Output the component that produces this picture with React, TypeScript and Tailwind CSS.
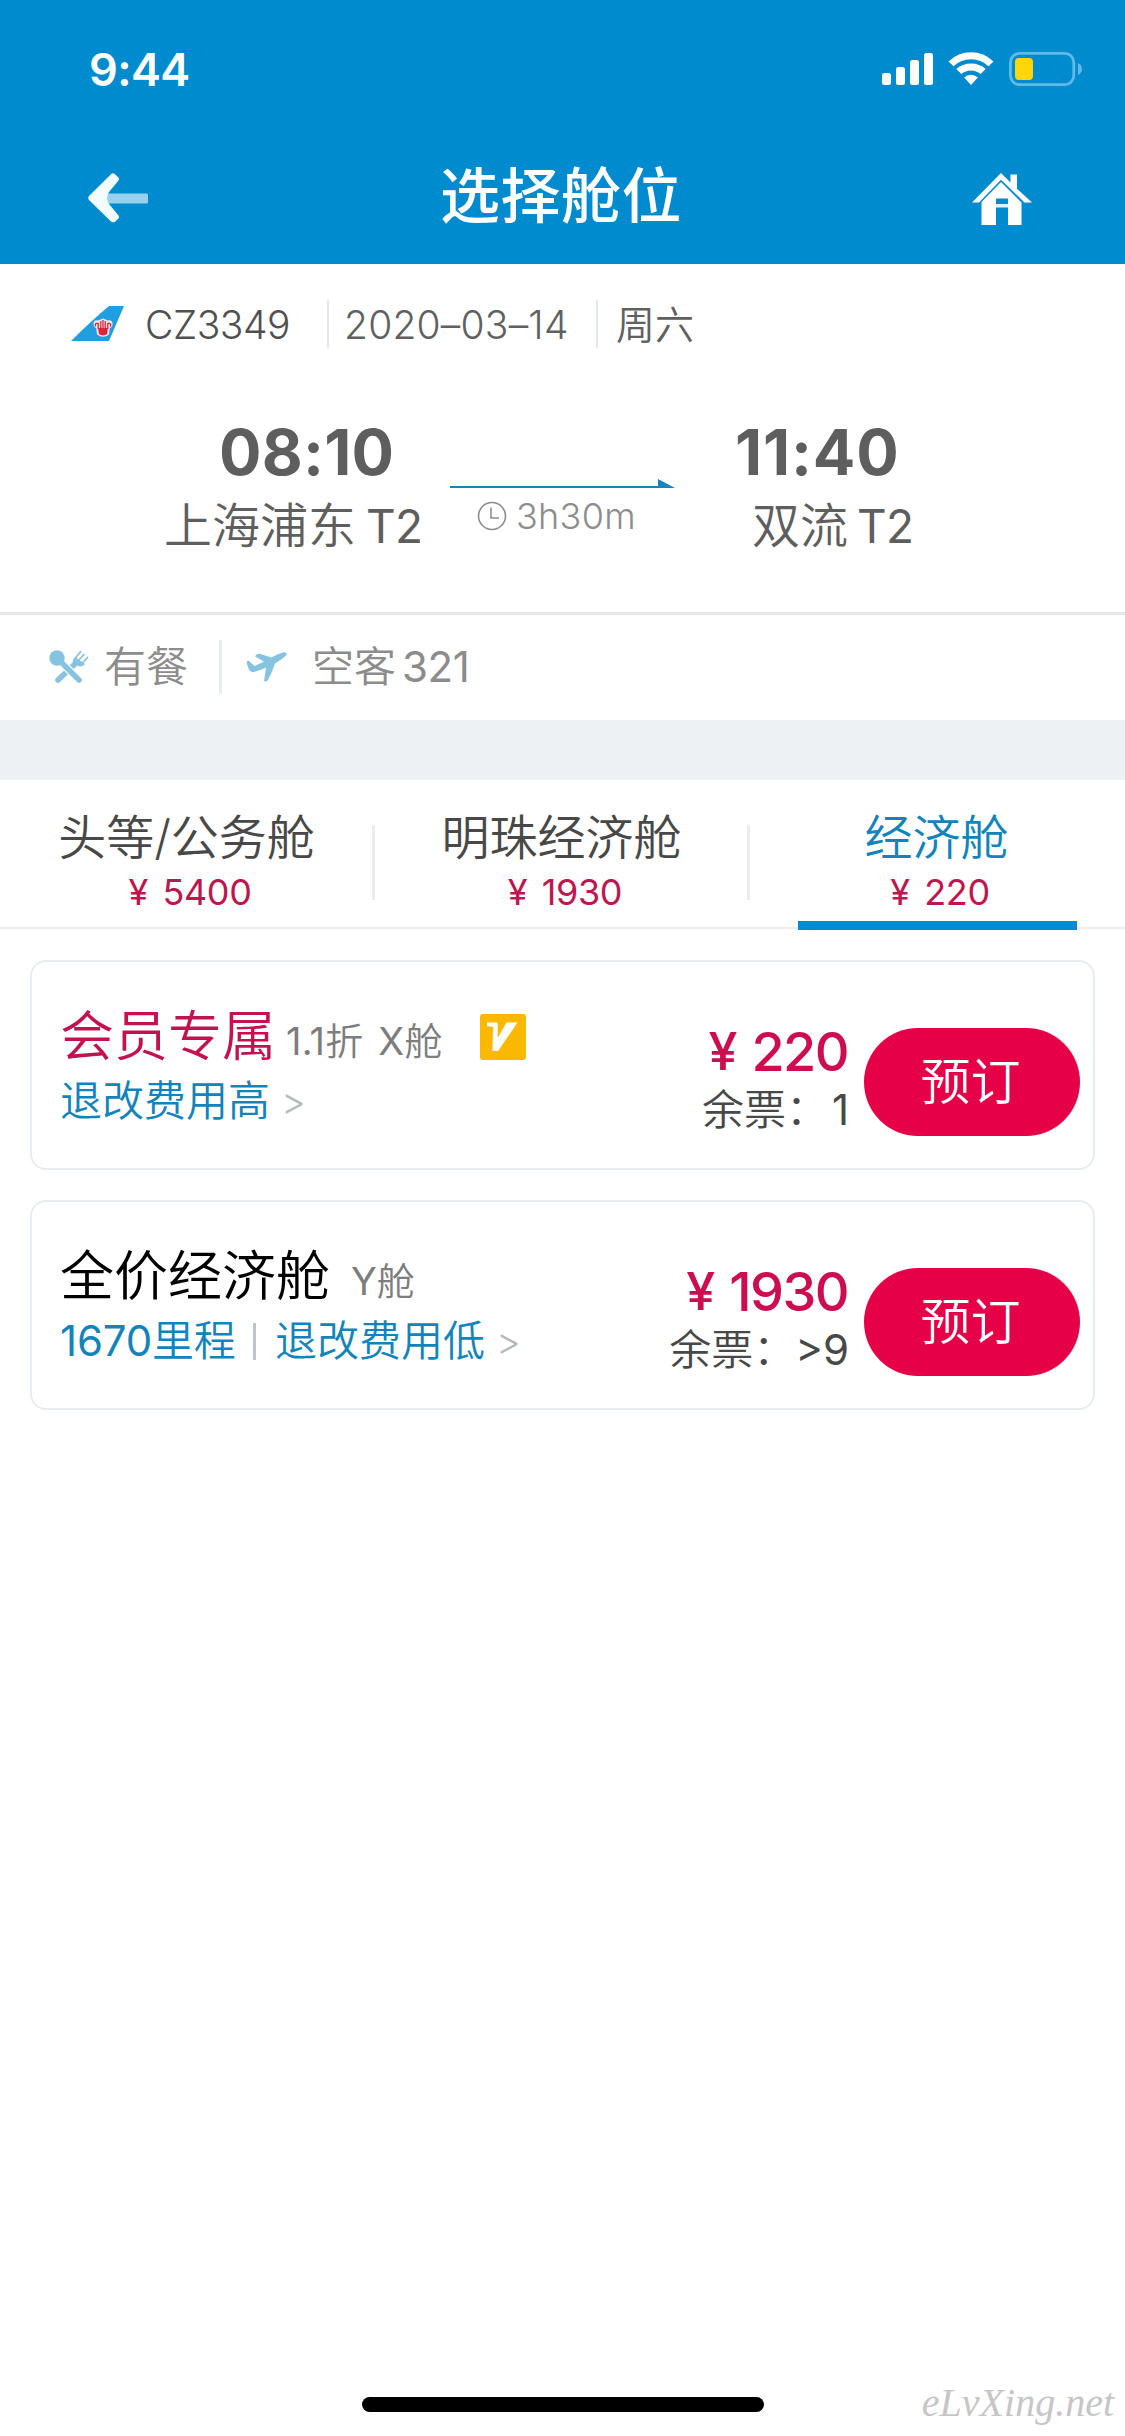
import React from "react";

function StatusIcons() {
  return (
    <div className="flex items-center">
      <svg width="51" height="34" viewBox="0 0 51 34" fill="#fff">
        <rect x="0" y="21" width="9" height="12" rx="2.5" />
        <rect x="14" y="15" width="9" height="18" rx="2.5" />
        <rect x="28" y="8" width="9" height="25" rx="2.5" />
        <rect x="42" y="1" width="9" height="32" rx="2.5" />
      </svg>
      <svg className="ml-[15px]" width="46" height="34" viewBox="0 0 46 34" fill="#fff">
        <path d="M0.5 9.5 Q10 0.3 23 0.3 T45.5 9.5 L40.5 14.3 Q33 7.3 23 7.3 T5.5 14.3Z" />
        <path d="M8.3 17 Q14.5 11.5 23 11.5 T37.7 17 L32.6 22 Q28.5 18.4 23 18.4 T13.4 22Z" />
        <path d="M16.2 25.6 Q19 22.8 23 22.8 T29.8 25.6 L23 33Z" />
      </svg>
      <svg className="ml-[15px]" width="74" height="34" viewBox="0 0 74 34">
        <rect x="1.4" y="1.4" width="63.4" height="31.2" rx="9" fill="none" stroke="#61b9e6" strokeWidth="2.8" />
        <rect x="6" y="6" width="18" height="22" rx="4" fill="#ffd60a" />
        <path d="M69 11 Q73 13 73 17 T69 23Z" fill="#61b9e6" />
      </svg>
    </div>
  );
}

function Header() {
  return (
    <header className="h-[264px] bg-[#008bce] text-white">
      <div className="flex h-[138px] items-center justify-between pl-[89px] pr-[42px]">
        <span className="text-[45px] font-semibold leading-none tracking-[-0.6px]">9:44</span>
        <StatusIcons />
      </div>
      <div className="flex h-[112px] items-center justify-between pl-[88px] pr-[93px]">
        <svg className="mt-[8px]" width="60" height="50" viewBox="0 0 60 50">
          <path d="M17 20.5H58.5Q60 20.5 60 22V29Q60 30.5 58.5 30.5H17Z" fill="#99d1ed" />
          <path
            d="M23 1.2Q25 -0.5 27 1.3L30.5 4.5Q31.5 6 30.5 7.5L21 19Q17 25 21 31L30.5 42.5Q31.5 44 30.5 45.5L27 48.8Q25 50 23 48.5L1 27Q-0.5 25 1 23Z"
            fill="#f3fcff"
          />
        </svg>
        <h1 className="ml-[2px] pt-[3px] text-[60px] font-medium leading-none tracking-[0.5px]">选择舱位</h1>
        <svg className="mt-[10px]" width="60" height="52" viewBox="0 0 60 52" fill="#fff">
          <path d="M0 29.5 L29 0 L38.5 9.5 V1.5 H45 V15.8 L60 29.5 H52.5 L29 6.8 L7 29.5Z" />
          <path d="M29 9 L49.5 29.5 V52 H36 V25.5 H24 V52 H9.5 V29Z" />
          <rect x="24" y="31" width="12" height="3.5" fill="#dff4fc" />
        </svg>
      </div>
    </header>
  );
}

// Sets Latin letters and digits in regular weight beside demi-light Chinese glyphs.
function Mixed({ text }: { text: string }) {
  return (
    <>
      {text.split(/([\x21-\x7e]+)/).map((part, i) => (
        <span key={i} className={i % 2 ? "font-normal" : "font-[350]"}>
          {part}
        </span>
      ))}
    </>
  );
}

function TailLogo() {
  return (
    <svg width="54" height="36" viewBox="0 0 54 36">
      <path d="M38 0H53L38 35H0Q20 15 38 0Z" fill="#1f9fe0" />
      <path
        d="M22.5 18Q22.5 13.5 27 14.5L32 12.5L37 14.5Q41.5 13.5 41.5 18Q41.5 21.5 38.8 22L38 28.5Q32 33 26 28.5L25.2 22Q22.5 21.5 22.5 18Z"
        fill="#f8e3ea"
      />
      <path d="M24.5 20.5Q23.5 16.5 27.2 17.5V23M39.5 20.5Q40.5 16.5 36.8 17.5V23M29.8 15V24M32 14V24M34.2 15V24" stroke="#d7263d" strokeWidth="1.3" fill="none" />
      <path d="M27 22H37L36 28.3Q32 30.5 28 28.3Z" fill="#d7263d" />
    </svg>
  );
}

function FlightInfo() {
  return (
    <section className="h-[348px]">
      <div className="flex h-[120px] items-center pl-[71px] leading-none text-[#505050]">
        <TailLogo />
        <span className="ml-[20px] w-[146px] whitespace-nowrap text-[39px] font-[350] tracking-[-0.5px]">CZ3349</span>
        <span className="ml-[36px] h-[48px] w-[2px] bg-[#e4e8ea]" />
        <span className="ml-[15px] w-[229px] whitespace-nowrap text-[39px] font-light tracking-[0.2px] text-[#606060]">
          2020–03–14
        </span>
        <span className="ml-[23px] h-[48px] w-[2px] bg-[#e4e8ea]" />
        <span className="ml-[18px] text-[39px] font-[350] text-[#606060]">周六</span>
      </div>
      <div className="flex pt-[34px] pl-[164px] text-[#5e5e5e]">
        <div className="flex w-[286px] flex-col">
          <span className="ml-[55px] whitespace-nowrap text-[63px] font-bold leading-[68px] tracking-[0.2px]">08:10</span>
          <span className="mt-[6px] flex items-center gap-[10px] whitespace-nowrap text-[48px] font-[350] leading-[68px]">
            上海浦东<span className="text-[46px] font-normal tracking-[-0.8px]">T2</span>
          </span>
        </div>
        <div className="flex w-[225px] flex-col pt-[61px]">
          <svg width="225" height="9" viewBox="0 0 225 9">
            <path d="M0 7H208V0L225 9H0Z" fill="#1586bd" />
          </svg>
          <div className="mt-[13px] flex items-center pl-[27px] leading-[30px] text-[#8c8c8c]">
            <svg width="30" height="30" viewBox="0 0 30 30" fill="none" stroke="#8c8c8c" strokeWidth="1.6">
              <circle cx="15" cy="15" r="13.5" />
              <path d="M14 6.5V17H22" />
            </svg>
            <span className="ml-[9px] whitespace-nowrap text-[36px] font-[350] tracking-[0.3px]">3h30m</span>
          </div>
        </div>
        <div className="flex w-[240px] flex-col">
          <span className="ml-[60px] whitespace-nowrap text-[63px] font-bold leading-[68px] tracking-[0.8px]">11:40</span>
          <span className="ml-[77px] mt-[6px] flex items-center gap-[9px] whitespace-nowrap text-[48px] font-[350] leading-[68px]">
            双流<span className="text-[46px] font-normal tracking-[-0.8px]">T2</span>
          </span>
        </div>
      </div>
    </section>
  );
}

function Amenities() {
  return (
    <section className="flex h-[108px] items-center border-t-[3px] border-[#e8e8e8] pb-[2px] pl-[49px] text-[42px] font-[350] leading-none text-[#8c8c8c]">
      <svg width="40" height="34" viewBox="0 0 40 34" stroke="#86c3e1" fill="#86c3e1" strokeLinecap="round">
        <path d="M9 30L27 13" strokeWidth="5.5" />
        <path d="M23.5 11.5Q24 9 26 7L36 14Q33.5 17 30 16.5Z" stroke="none" />
        <path d="M26 8.5L31.5 1.8M29.5 10.5L35 4.5M33 13.5L38.5 7.5" strokeWidth="1.8" fill="none" />
        <path d="M9 9L30 30" strokeWidth="8" stroke="#fff" />
        <path d="M9 9L30 30" strokeWidth="5.5" />
        <circle cx="8" cy="8" r="7.7" stroke="none" />
      </svg>
      <span className="ml-[15px]">有餐</span>
      <span className="ml-[31px] h-[54px] w-[3px] bg-[#e9edef]" />
      <svg className="ml-[24px]" width="42" height="34" viewBox="0 0 42 34" fill="#86c3e1">
        <path d="M0.5 11.5Q3 9.5 5 13L8.5 16L18 11.8L9 6.2Q11 3 14.5 4L25.5 7.5Q32 3.5 37.5 2.2Q42 2 40.5 5Q37.5 8 29 13.5Q25.5 24 21.5 30.5Q20 32 18 31L20 17.5Q12 21.5 6 22.2Q2.5 22 0.5 11.5Z" />
      </svg>
      <span className="ml-[24px]">空客</span>
      <span className="ml-[6px] font-normal tracking-[-0.4px]">321</span>
    </section>
  );
}

const tabs = [
  { name: "头等/公务舱", price: "5400", active: false },
  { name: "明珠经济舱", price: "1930", active: false },
  { name: "经济舱", price: "220", active: true },
];

function CabinTabs() {
  return (
    <nav className="flex h-[149px] border-b-2 border-[#ececee]">
      {tabs.map((t, i) => (
        <div key={t.name} className="relative flex h-[149px] w-[375px] shrink-0 flex-col items-center pt-[28px] font-[350]">
          <span
            className={
              t.active
                ? "mr-[2px] text-[48px] leading-[60px] text-[#1384bb]"
                : "mr-[2px] text-[48px] leading-[60px] text-[#484848]"
            }
          >
            {t.name}
          </span>
          <span className="ml-[5px] flex items-center text-[36px] font-normal leading-[48px] tracking-[-0.4px] text-[#bd174f]">
            <span className="w-[34px]">¥</span>
            {t.price}
          </span>
          {i < 2 && <span className="absolute right-0 top-[45px] h-[75px] w-[3px] bg-[#ececee]" />}
          {t.active && <span className="absolute bottom-[-1px] left-[48px] h-[9px] w-[279px] bg-[#008bce]" />}
        </div>
      ))}
    </nav>
  );
}

type Fare = {
  title: string;
  member?: boolean;
  detail: string;
  miles?: string;
  rule: string;
  price: string;
  left: string;
};

const fares: Fare[] = [
  { title: "会员专属", member: true, detail: "1.1折 X舱", rule: "退改费用高", price: "220", left: "1" },
  { title: "全价经济舱", detail: "Y舱", miles: "1670里程", rule: "退改费用低", price: "1930", left: ">9" },
];

function FareCard({ fare }: { fare: Fare }) {
  return (
    <article className="flex h-[210px] justify-between rounded-[16px] border-2 border-[#e8ecee] pl-[28px] pr-[13px]">
      <div className="pt-[42px]">
        <div className="flex h-[66px] items-center whitespace-nowrap leading-none">
          <span className={fare.member ? "text-[54px] font-[350] text-[#c2134f]" : "text-[54px] font-[350] text-black"}>
            {fare.title}
          </span>
          <span
            className={
              fare.member
                ? "ml-[10px] w-[160px] pt-[8px] text-[38px] tracking-[0.2px] text-[#7d7d7d] [word-spacing:4px]"
                : "ml-[21px] pt-[8px] text-[38px] text-[#7d7d7d]"
            }
          >
            <Mixed text={fare.detail} />
          </span>
          {fare.member && (
            <svg className="ml-[34px]" width="46" height="46" viewBox="0 0 46 46">
              <rect width="46" height="46" rx="3" fill="#fbb800" />
              <path d="M7 8.5H16.5Q18 8.5 17.7 11V24L26.5 8.5H37.5L18 37H12.5L13 13L7 12Z" fill="#fff" />
            </svg>
          )}
        </div>
        <div className="flex h-[62px] items-center whitespace-nowrap text-[42px] font-[350] leading-none text-[#1384bb]">
          {fare.miles && (
            <>
              <span className="w-[176px] tracking-[-0.2px]">
                <Mixed text={fare.miles} />
              </span>
              <span className="ml-[17px] mr-[19px] h-[37px] w-[3px] bg-[#bfc4c7]" />
            </>
          )}
          <span>{fare.rule}</span>
          <span className="ml-[11px] text-[38px] text-[#b4b9bd]">&gt;</span>
        </div>
      </div>
      <div className="flex">
        <div className="flex flex-col items-end whitespace-nowrap pt-[60px]">
          <span className="mr-px flex text-[54px] font-medium leading-[60px] tracking-[-1.6px] text-[#cc0e4f]">
            <span className="w-[43px] text-[52px]">¥</span>
            {fare.price}
          </span>
          <span className="flex text-[42px] font-[350] leading-[56px] text-[#484848]">
            余票：<span className={fare.member ? "ml-[4px] font-normal" : "font-normal"}>{fare.left}</span>
          </span>
        </div>
        <button className="ml-[15px] mt-[66px] h-[108px] w-[216px] rounded-full bg-[#e50048] pr-[3px] text-[50px] font-[350] leading-none text-white">
          预订
        </button>
      </div>
    </article>
  );
}

export default function App() {
  return (
    <div className="flex h-[2436px] w-[1125px] flex-col overflow-hidden bg-white font-['Inter','Noto_Sans_CJK_SC',sans-serif]">
      <Header />
      <FlightInfo />
      <Amenities />
      <div className="h-[60px] bg-[#edf1f4]" />
      <CabinTabs />
      <main className="flex flex-1 flex-col gap-[30px] px-[30px] pt-[31px]">
        {fares.map((f) => (
          <FareCard key={f.title} fare={f} />
        ))}
      </main>
      <footer className="grid h-[66px] grid-cols-[362px_402px_1fr] items-center">
        <span />
        <span className="mt-[2px] h-[15px] rounded-full bg-black" />
        <span className="pr-[11px] text-right font-['Liberation_Serif',serif] text-[40px] italic leading-none text-[#c6c6c6]">
          eLvXing.net
        </span>
      </footer>
    </div>
  );
}
